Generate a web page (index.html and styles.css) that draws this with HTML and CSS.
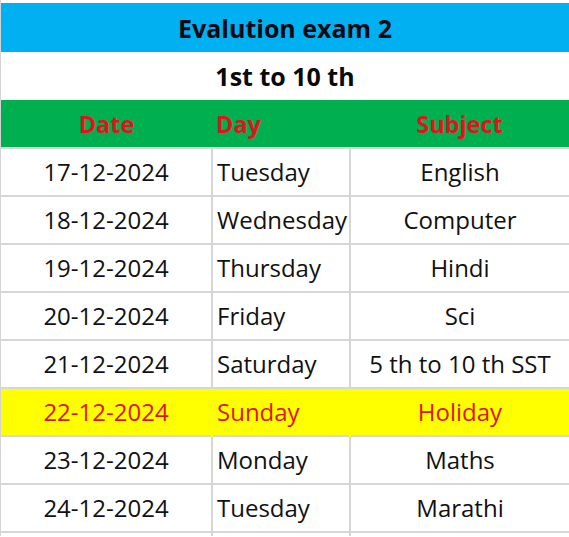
FILE: index.html
```html
<!DOCTYPE html>
<html>
<head>
<meta charset="utf-8">
<link rel="stylesheet" href="styles.css">
</head>
<body>
<div class="sheet">
<table class="schedule">
  <colgroup>
    <col class="c-date">
    <col class="c-day">
    <col class="c-subject">
  </colgroup>
  <tr class="title-row"><td colspan="3">Evalution exam 2</td></tr>
  <tr class="sub-row"><td colspan="3">1st to 10 th</td></tr>
  <tr class="head-row"><td class="center">Date</td><td class="left">Day</td><td class="center">Subject</td></tr>
  <tr class="data"><td class="center">17-12-2024</td><td class="left">Tuesday</td><td class="center">English</td></tr>
  <tr class="data"><td class="center">18-12-2024</td><td class="left">Wednesday</td><td class="center">Computer</td></tr>
  <tr class="data"><td class="center">19-12-2024</td><td class="left">Thursday</td><td class="center">Hindi</td></tr>
  <tr class="data"><td class="center">20-12-2024</td><td class="left">Friday</td><td class="center">Sci</td></tr>
  <tr class="data"><td class="center">21-12-2024</td><td class="left">Saturday</td><td class="center">5 th to 10 th SST</td></tr>
  <tr class="data holiday"><td class="center">22-12-2024</td><td class="left">Sunday</td><td class="center">Holiday</td></tr>
  <tr class="data"><td class="center">23-12-2024</td><td class="left">Monday</td><td class="center">Maths</td></tr>
  <tr class="data"><td class="center">24-12-2024</td><td class="left">Tuesday</td><td class="center">Marathi</td></tr>
  <tr class="data stub"><td></td><td></td><td></td></tr>
</table>
</div>
</body>
</html>
```

FILE: styles.css
```css
html, body {
  margin: 0;
  padding: 0;
  background: #ffffff;
  height: 537px;
  overflow: hidden;
}

.sheet {
  padding-top: 3px;
  border-left: 1px solid #d4d4d4;
  width: 568px;
}

.schedule {
  border-collapse: collapse;
  table-layout: fixed;
  width: 568px;
  font-family: "Open Sans", "Liberation Sans", sans-serif;
  font-size: 24px;
  color: #111111;
}

.c-date { width: 211px; }
.c-day { width: 138px; }
.c-subject { width: 219px; }

.schedule td {
  padding: 0;
  white-space: nowrap;
  overflow: hidden;
}

.title-row td {
  background: #00b0f0;
  height: 49px;
  text-align: center;
  font-weight: 700;
  font-size: 25px;
  color: #0a0a14;
}

.sub-row td {
  background: #ffffff;
  height: 48px;
  text-align: center;
  font-weight: 700;
  font-size: 25px;
  color: #0a0a0a;
}

.head-row td {
  background: #00b050;
  height: 47px;
  font-weight: 700;
  font-size: 23.5px;
  color: #e0141a;
}

.data td {
  height: 44px;
  padding-bottom: 2px;
  border-top: 2px solid #d6d6d6;
  border-left: 2px solid #d6d6d6;
}

.data td:first-child {
  border-left: none;
}

.stub td {
  height: 3px;
  padding-bottom: 0;
}

.center { text-align: center; }
.left { text-align: left; padding-left: 4px !important; }

.holiday td {
  background: #ffff00;
  color: #e0141a;
  border-left-color: #ffff00;
}
```
